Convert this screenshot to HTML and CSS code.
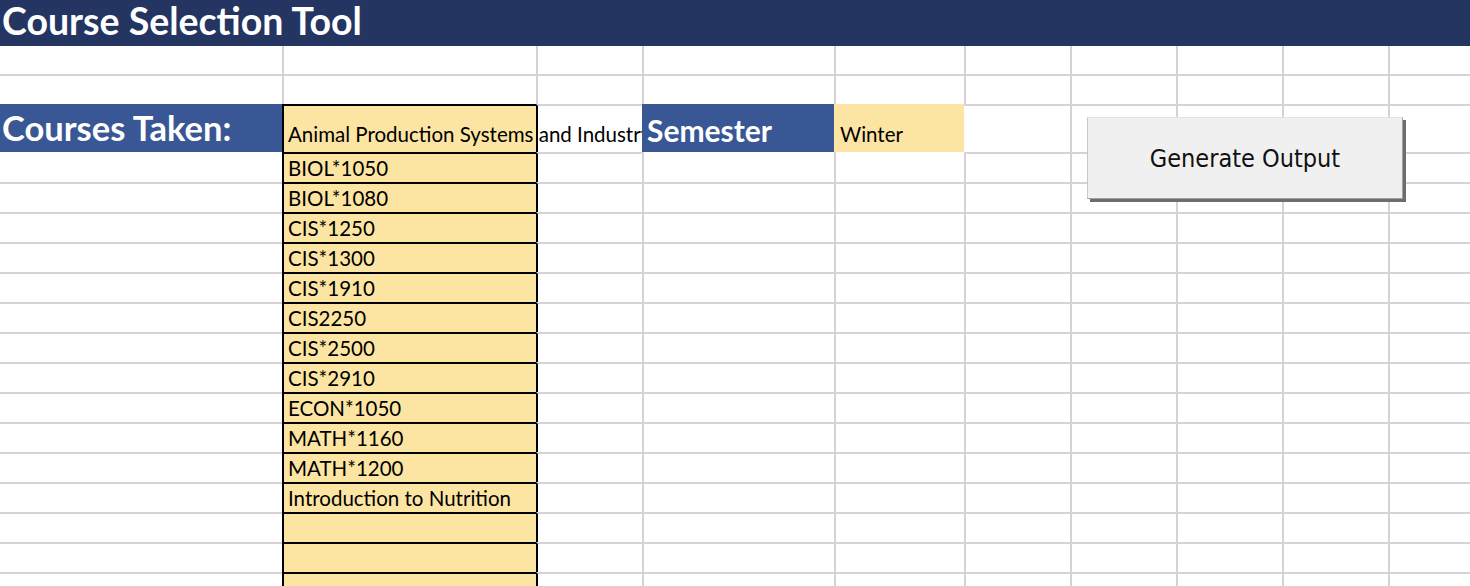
FILE: index.html
```html
<!DOCTYPE html>
<html lang="en">
<head>
<meta charset="utf-8">
<title>Course Selection Tool</title>
<link rel="stylesheet" href="styles.css">
</head>
<body>
<div class="sheet">
  <div class="title">Course Selection Tool</div>

  <div class="c a nt"></div><div class="c nt"></div><div class="c nt"></div><div class="c nt"></div><div class="c nt"></div><div class="c nt"></div><div class="c nt"></div><div class="c nt"></div><div class="c nt"></div><div class="c nt"></div>

  <div class="c a"></div><div class="c"></div><div class="c"></div><div class="c"></div><div class="c"></div><div class="c"></div><div class="c"></div><div class="c"></div><div class="c"></div><div class="c"></div>

  <div class="c a blue label"><span>Courses Taken:</span></div>
  <div class="c yellow first"><span class="spill">Animal Production Systems and Industry</span></div>
  <div class="c after"></div>
  <div class="c blue semester"><span>Semester</span></div>
  <div class="c fill-y value"><span>Winter</span></div>
  <div class="c nl"></div><div class="c"></div><div class="c"></div><div class="c"></div><div class="c"></div>

  <div class="c a nt"></div><div class="c yellow item">BIOL*1050</div><div class="c after"></div><div class="c nt"></div><div class="c nt"></div><div class="c"></div><div class="c"></div><div class="c"></div><div class="c"></div><div class="c"></div>
  <div class="c a"></div><div class="c yellow item">BIOL*1080</div><div class="c after"></div><div class="c"></div><div class="c"></div><div class="c"></div><div class="c"></div><div class="c"></div><div class="c"></div><div class="c"></div>
  <div class="c a"></div><div class="c yellow item">CIS*1250</div><div class="c after"></div><div class="c"></div><div class="c"></div><div class="c"></div><div class="c"></div><div class="c"></div><div class="c"></div><div class="c"></div>
  <div class="c a"></div><div class="c yellow item">CIS*1300</div><div class="c after"></div><div class="c"></div><div class="c"></div><div class="c"></div><div class="c"></div><div class="c"></div><div class="c"></div><div class="c"></div>
  <div class="c a"></div><div class="c yellow item">CIS*1910</div><div class="c after"></div><div class="c"></div><div class="c"></div><div class="c"></div><div class="c"></div><div class="c"></div><div class="c"></div><div class="c"></div>
  <div class="c a"></div><div class="c yellow item">CIS2250</div><div class="c after"></div><div class="c"></div><div class="c"></div><div class="c"></div><div class="c"></div><div class="c"></div><div class="c"></div><div class="c"></div>
  <div class="c a"></div><div class="c yellow item">CIS*2500</div><div class="c after"></div><div class="c"></div><div class="c"></div><div class="c"></div><div class="c"></div><div class="c"></div><div class="c"></div><div class="c"></div>
  <div class="c a"></div><div class="c yellow item">CIS*2910</div><div class="c after"></div><div class="c"></div><div class="c"></div><div class="c"></div><div class="c"></div><div class="c"></div><div class="c"></div><div class="c"></div>
  <div class="c a"></div><div class="c yellow item">ECON*1050</div><div class="c after"></div><div class="c"></div><div class="c"></div><div class="c"></div><div class="c"></div><div class="c"></div><div class="c"></div><div class="c"></div>
  <div class="c a"></div><div class="c yellow item">MATH*1160</div><div class="c after"></div><div class="c"></div><div class="c"></div><div class="c"></div><div class="c"></div><div class="c"></div><div class="c"></div><div class="c"></div>
  <div class="c a"></div><div class="c yellow item">MATH*1200</div><div class="c after"></div><div class="c"></div><div class="c"></div><div class="c"></div><div class="c"></div><div class="c"></div><div class="c"></div><div class="c"></div>
  <div class="c a"></div><div class="c yellow item">Introduction to Nutrition</div><div class="c after"></div><div class="c"></div><div class="c"></div><div class="c"></div><div class="c"></div><div class="c"></div><div class="c"></div><div class="c"></div>
  <div class="c a"></div><div class="c yellow item"></div><div class="c after"></div><div class="c"></div><div class="c"></div><div class="c"></div><div class="c"></div><div class="c"></div><div class="c"></div><div class="c"></div>
  <div class="c a"></div><div class="c yellow item"></div><div class="c after"></div><div class="c"></div><div class="c"></div><div class="c"></div><div class="c"></div><div class="c"></div><div class="c"></div><div class="c"></div>
  <div class="c a"></div><div class="c yellow item"></div><div class="c after"></div><div class="c"></div><div class="c"></div><div class="c"></div><div class="c"></div><div class="c"></div><div class="c"></div><div class="c"></div>

  <button class="generate" type="button">Generate Output</button>
</div>
</body>
</html>
```
FILE: styles.css
```css
html, body {
  margin: 0;
  padding: 0;
  background: #ffffff;
}

body {
  width: 1470px;
  height: 586px;
  overflow: hidden;
  font-family: Lato, "Liberation Sans", sans-serif;
  color: #000000;
}

.sheet {
  position: relative;
  display: grid;
  grid-template-columns: 282px 254px 106px 192px 130px 106px 106px 106px 106px 1fr;
  grid-template-rows: 46px 28px 30px 48px repeat(15, 30px);
}

.title {
  grid-column: 1 / -1;
  background: #243561;
  color: #ffffff;
  font-weight: 700;
  font-size: 37.5px;
  line-height: 1;
  padding: 2px 0 0 2px;
  white-space: nowrap;
}

.c {
  box-sizing: border-box;
  min-width: 0;
  border-left: 2px solid #d4d4d4;
  border-top: 2px solid #d4d4d4;
  display: flex;
  align-items: flex-end;
  font-size: 20.5px;
  line-height: 1.2;
  white-space: nowrap;
}

.c.a { border-left: none; }
.c.nt { border-top: none; }
.c.nl { border-left: none; }

.c.after { border-left-color: #000000; }

.blue {
  background: #3a5795;
  border-color: transparent;
  color: #ffffff;
  font-weight: 700;
  line-height: 1;
}

.c.a.blue {
  border-left: none;
}

.label {
  font-size: 34.5px;
  padding: 0 0 7px 2px;
}

.semester {
  font-size: 30px;
  padding: 0 0 7px 3px;
}

.yellow {
  background: #fce5a3;
  border-left-color: #000000;
  border-top-color: #000000;
}

.fill-y {
  background: #fce5a3;
  border-color: transparent;
}

.first {
  padding: 0 0 5px 4px;
  overflow: visible;
}

.spill {
  flex: 0 0 auto;
  width: 354px;
  overflow: hidden;
  white-space: nowrap;
}

.value {
  padding: 0 0 5px 4px;
}

.item {
  padding: 0 0 1px 4px;
}

.generate {
  position: absolute;
  left: 1087px;
  top: 117px;
  width: 316px;
  height: 82px;
  margin: 0;
  padding: 0;
  box-sizing: border-box;
  background: #f0f0f0;
  border-top: 1px solid #e2e2e2;
  border-left: 1px solid #c8c8c8;
  border-right: 1px solid #a0a0a0;
  border-bottom: 1px solid #a0a0a0;
  box-shadow: 3px 3px 0 #6d6d6d;
  font-family: "DejaVu Sans Condensed", "DejaVu Sans", sans-serif;
  font-size: 25px;
  color: #111111;
  text-align: center;
  cursor: default;
}
```
